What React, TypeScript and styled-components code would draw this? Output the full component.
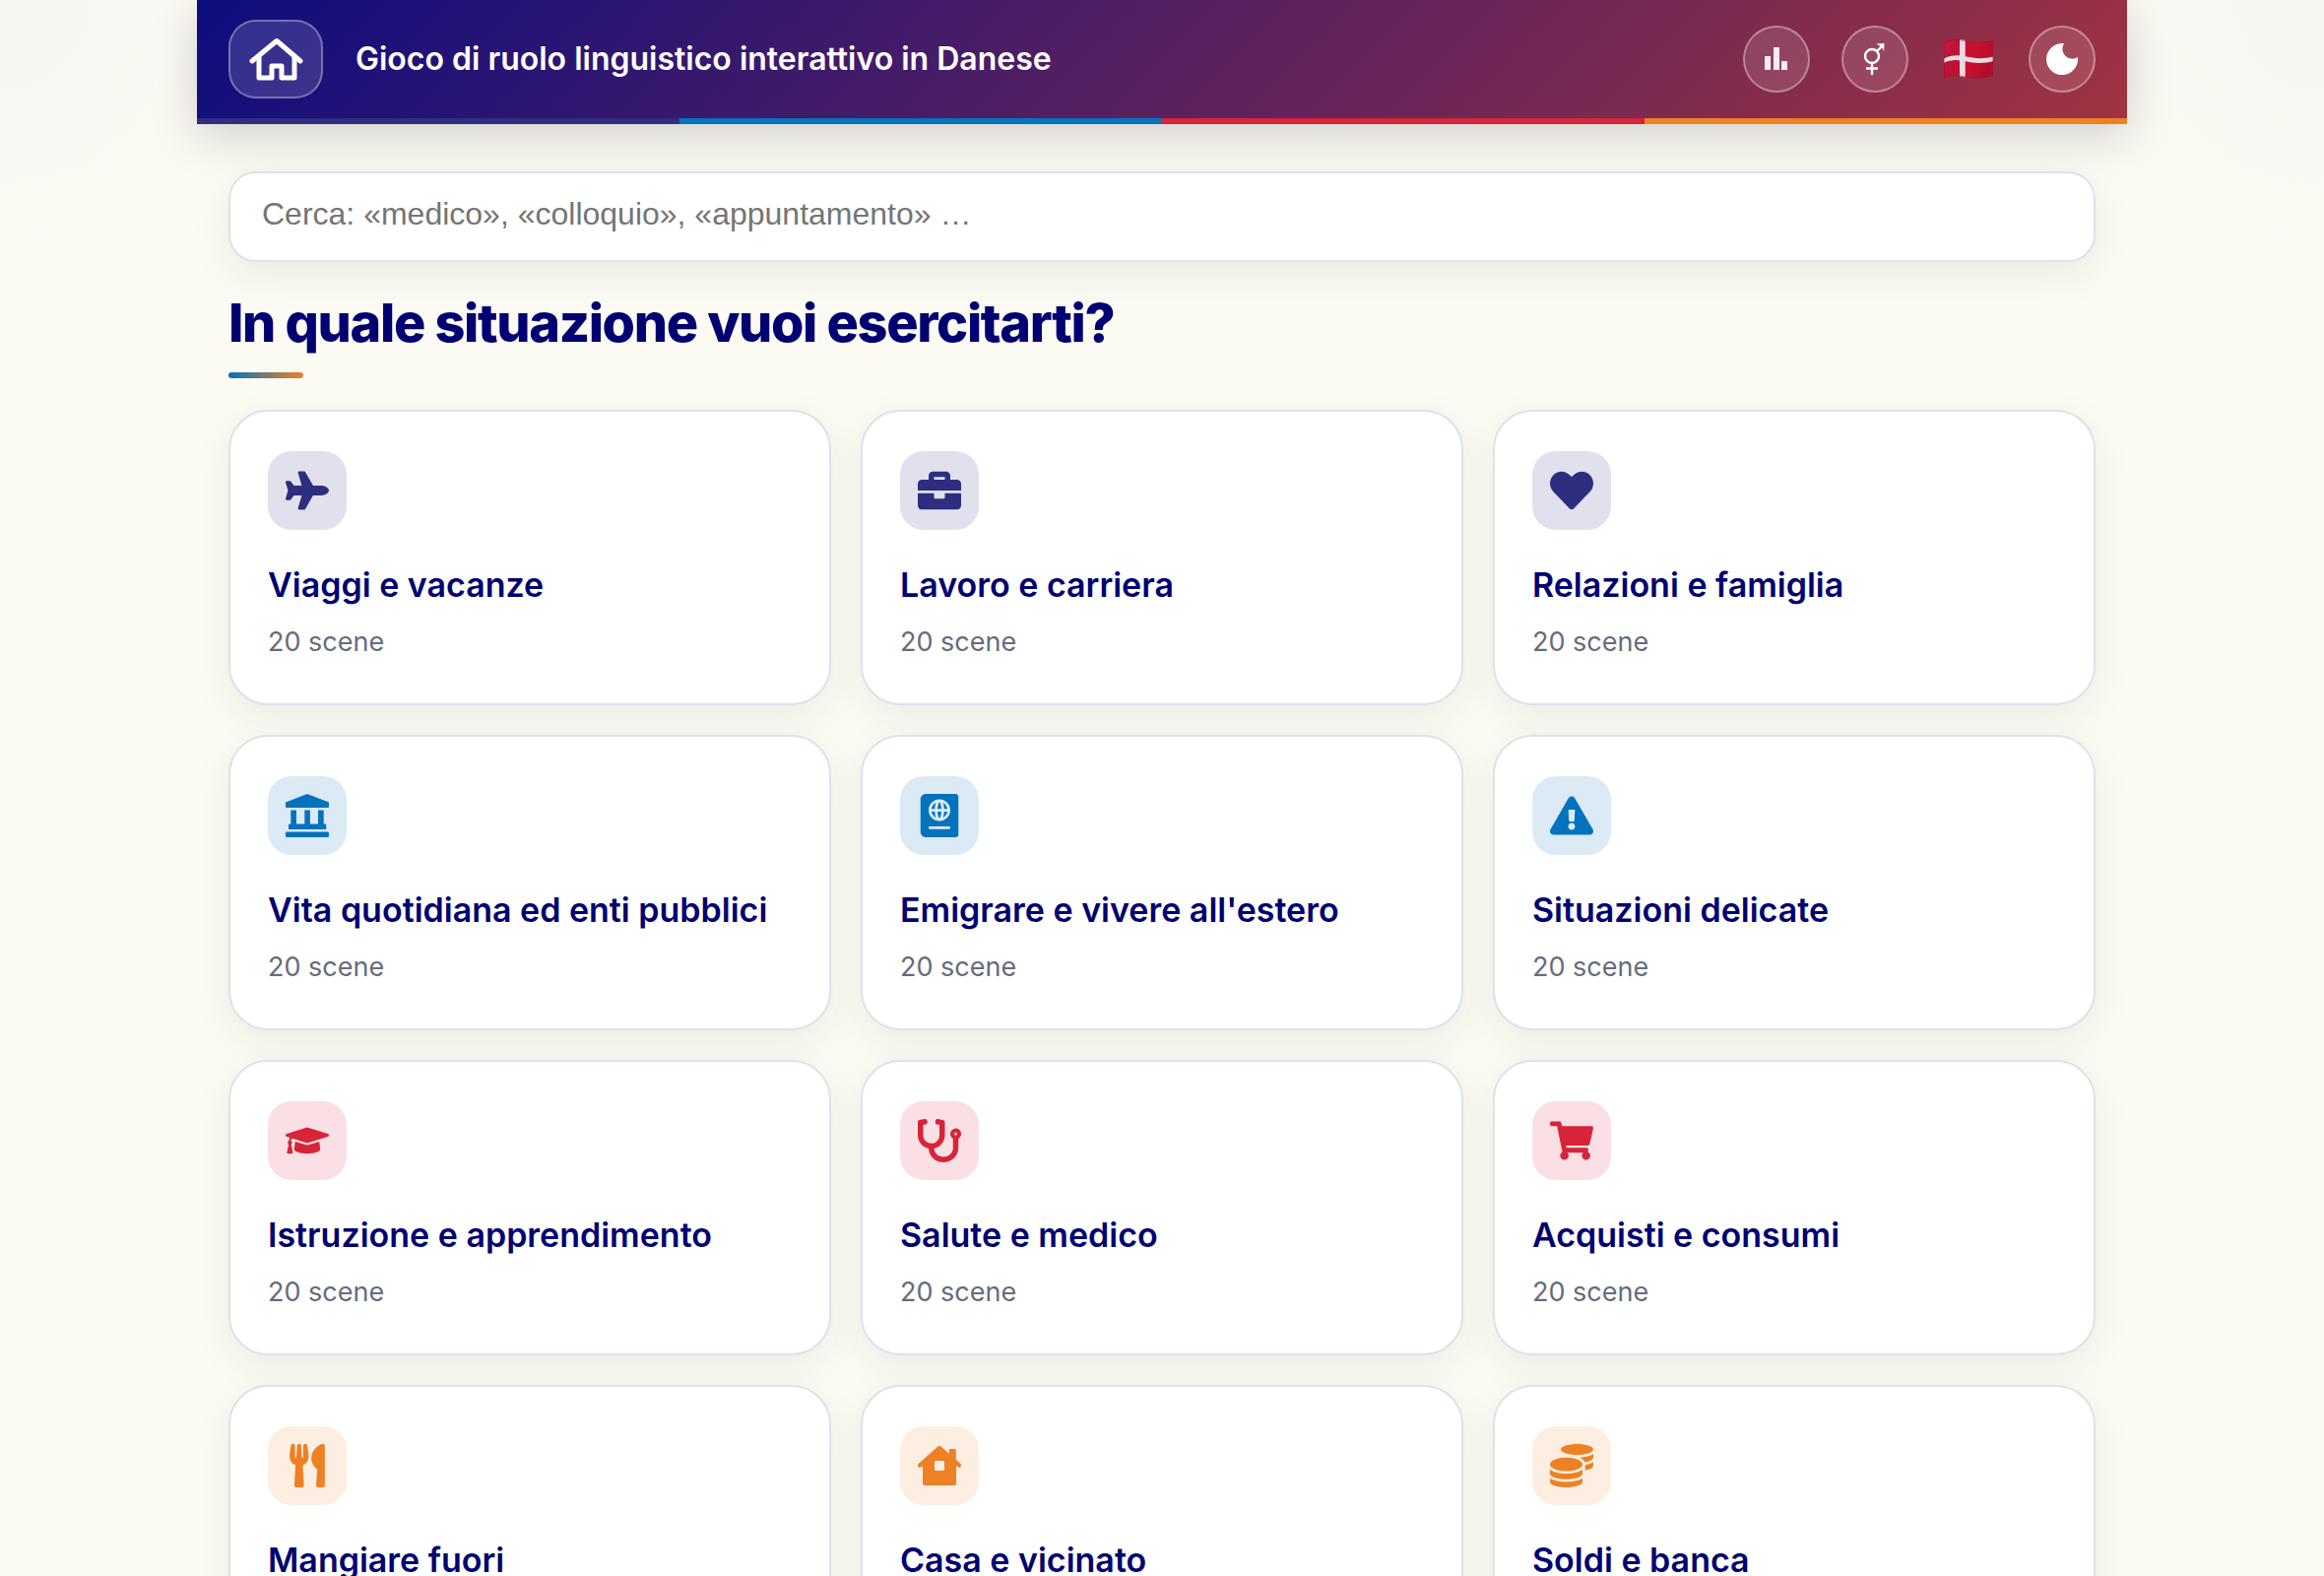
import React from "react";
import type { ComponentType } from "react";
import styled, { createGlobalStyle } from "styled-components";
import {
  FaPlane,
  FaBriefcase,
  FaHeart,
  FaPassport,
  FaExclamationTriangle,
  FaGraduationCap,
  FaStethoscope,
  FaShoppingCart,
  FaUtensils,
  FaCoins,
} from "react-icons/fa";

const GlobalStyle = createGlobalStyle`
  *, *::before, *::after { box-sizing: border-box; }
  body {
    margin: 0;
    font-family: Inter, "Liberation Sans", sans-serif;
    color: #000072;
    background:
      radial-gradient(circle at 0 0, rgba(46, 45, 127, 0.03), transparent 300px),
      radial-gradient(circle at 100% 0, rgba(46, 45, 127, 0.03), transparent 300px),
      #fcfbf3;
  }
`;

const Page = styled.div`
  max-width: 1960px;
  margin: 0 auto;
`;

const Header = styled.header`
  box-shadow: 0 12px 48px rgba(0, 0, 20, 0.18);
`;

const Bar = styled.div`
  display: flex;
  align-items: center;
  justify-content: space-between;
  height: 120px;
  padding: 0 32px;
  background: linear-gradient(135deg, #0d0d7f 0%, #a03341 100%);
`;

const Brand = styled.div`
  display: flex;
  align-items: center;
  gap: 33px;
`;

const HomeButton = styled.button`
  display: grid;
  place-items: center;
  width: 96px;
  height: 80px;
  padding: 0;
  border: 2px solid rgba(255, 255, 255, 0.32);
  border-radius: 28px;
  background: rgba(255, 255, 255, 0.14);
  cursor: pointer;
`;

const SiteTitle = styled.span`
  font-size: 32px;
  line-height: 44px;
  font-weight: 600;
  color: #fff;
`;

const Tools = styled.nav`
  display: flex;
  align-items: center;
  gap: 32px;
`;

const ToolButton = styled.button`
  display: grid;
  place-items: center;
  width: 68px;
  height: 68px;
  padding: 0;
  border: 2px solid rgba(255, 255, 255, 0.36);
  border-radius: 50%;
  background: rgba(255, 255, 255, 0.12);
  cursor: pointer;
`;

const FlagButton = styled.button`
  display: grid;
  place-items: center;
  width: 58px;
  height: 68px;
  padding: 0;
  border: 0;
  background: none;
  cursor: pointer;
`;

const Stripes = styled.div`
  height: 6px;
  background: linear-gradient(
    90deg,
    #2e2d7f 0 25%,
    #0473bd 25% 50%,
    #d82438 50% 75%,
    #ed8123 75%
  );
`;

const Main = styled.main`
  padding: 48px 32px;
`;

const Search = styled.input`
  display: block;
  width: 100%;
  height: 92px;
  padding: 0 32px 6px;
  border: 2px solid #dfe1eb;
  border-radius: 28px;
  background: #fff;
  box-shadow: 0 12px 40px rgba(0, 0, 40, 0.08);
  font: 32px "Liberation Sans", Arial, sans-serif;
  color: #000072;
  &::placeholder {
    color: #757575;
    opacity: 1;
  }
`;

const Heading = styled.h1`
  margin: 28px 0 32px;
  font-size: 54px;
  line-height: 68px;
  font-weight: 800;
  letter-spacing: -0.025em;
  &::after {
    content: "";
    display: block;
    width: 76px;
    height: 6px;
    margin-top: 16px;
    border-radius: 3px;
    background: linear-gradient(90deg, #0473bd, #ed8123);
  }
`;

const Grid = styled.div`
  display: grid;
  grid-template-columns: repeat(3, 1fr);
  gap: 30px;
`;

const Card = styled.button`
  display: flex;
  flex-direction: column;
  align-items: flex-start;
  padding: 40px 38px;
  border: 2px solid #dfe1eb;
  border-radius: 40px;
  background: #fff;
  box-shadow: 0 12px 40px rgba(0, 0, 40, 0.07);
  font-family: inherit;
  color: inherit;
  text-align: left;
  cursor: pointer;
`;

const tones = {
  navy: ["#2e2d7f", "#e1e1ed"],
  blue: ["#0473bd", "#dceaf6"],
  red: ["#d82438", "#fae0e5"],
  orange: ["#ed8123", "#fdeee2"],
};
type Tone = keyof typeof tones;

const Tile = styled.span<{ $tone: Tone }>`
  display: grid;
  place-items: center;
  width: 80px;
  height: 80px;
  border-radius: 24px;
  font-size: 44px;
  color: ${(p) => tones[p.$tone][0]};
  background: ${(p) => tones[p.$tone][1]};
`;

const CardTitle = styled.span`
  margin-top: 34px;
  font-size: 34px;
  line-height: 44px;
  font-weight: 600;
`;

const CardMeta = styled.span`
  margin-top: 14px;
  font-size: 27px;
  line-height: 44px;
  color: #686b7b;
`;

const HomeIcon = () => (
  <svg width="56" height="46" viewBox="0 0 56 46" fill="none" stroke="#fff" strokeWidth="5" strokeLinecap="round" strokeLinejoin="round" aria-hidden="true">
    <path d="M4 25 29 4.500l24 20.500" />
    <path d="M11 21v21h13V30h10v12h13V21" />
  </svg>
);

const ChartIcon = () => (
  <svg width="24" height="24" viewBox="0 0 24 24" fill="#fbeaf3" aria-hidden="true">
    <rect x="0" y="9" width="6" height="14" />
    <rect x="9" y="0" width="6" height="23" />
    <rect x="17" y="14" width="6" height="9" />
  </svg>
);

const GenderIcon = () => (
  <svg width="30" height="36" viewBox="0 0 30 36" fill="none" stroke="#fff" strokeWidth="2.400" aria-hidden="true">
    <circle cx="12" cy="15" r="7" />
    <path d="M12 22v12M6 27.500h12M17 10l5.500-5.500" />
    <path d="m16.500 2.500 8-.5-.5 8-2-4z" fill="#fff" stroke="none" />
  </svg>
);

const MoonIcon = () => (
  <svg width="32" height="32" viewBox="0 0 32 32" fill="#fff" aria-hidden="true">
    <path d="M18 .2A16 16 0 1 0 31.900 14 10 10 0 0 1 18 .2z" />
  </svg>
);

const FlagIcon = () => (
  <svg width="50" height="40" viewBox="0 0 50 40" aria-hidden="true">
    <defs>
      <linearGradient id="cloth" x1="0" y1="0" x2="1" y2="0.400">
        <stop offset="0" stopColor="#cf1743" />
        <stop offset="0.300" stopColor="#bd1236" />
        <stop offset="0.650" stopColor="#c9102f" />
        <stop offset="1" stopColor="#b30f2c" />
      </linearGradient>
    </defs>
    <path d="M0 3C6-.5 13-.5 19 .8 28 2.500 38 4 50 .5V37c-12 4-22 2.500-31 .8C13 36.500 6 36.500 0 40z" fill="url(#cloth)" />
    <path d="M0 19.500c6-3.500 13-3.500 19-2.700 9 1.700 19 4 31 .7v4.500c-12 3.500-22 1.500-31-.2-6-1.300-13-1.300-19 2z" fill="#ecd9e2" />
    <path d="M16 .300q3 0 5.700.8v37.300q-2.700-.6-5.700-.8z" fill="#ecd9e2" />
    <path d="M.5 3.300C6.500 0 13 0 19 1.300 28 3 38 4.500 49.500 1.200v35.500c-11.500 3.500-21.500 2.200-30.500.6-6-1.300-12.500-1.300-18.500 1.900z" fill="none" stroke="#8d1230" strokeOpacity="0.400" />
  </svg>
);

const InstitutionIcon = () => (
  <svg width="1em" height="1em" viewBox="0 0 44 44" fill="currentColor" aria-hidden="true">
    <path d="M22 0 44 8.500V13q0 1-1 1H1q-1 0-1-1V8.500z" />
    <path d="M5.300 16.500H11v14h8.300v-14h5.600v14H33v-14h5.700v14H40q1.300 0 1.300 1.300V36H3v-4.200q0-1.300 1.300-1.300h1z" />
    <rect y="38.500" width="44" height="5.500" rx="1.200" />
  </svg>
);

const CottageIcon = () => (
  <svg width="1em" height="1em" viewBox="0 -2 44 44" fill="currentColor" aria-hidden="true">
    <path
      fillRule="evenodd"
      d="M19.800.9Q22-.8 24.200.9L31.800 7.700V4q0-1 1-1h5q1 0 1 1v10l4.700 4.300Q44.700 19.700 43.500 21.200 42.200 22.600 40.900 21.600L39 20v18q0 2-2 2H7q-2 0-2-2V20l-1.900 1.600Q1.800 22.600.5 21.200-.7 19.700.5 18.300zM17 16v8q0 1 1 1h8q1 0 1-1v-8q0-1-1-1h-8q-1 0-1 1z"
    />
  </svg>
);

const categories: { title: string; icon: ComponentType; tone: Tone }[] = [
  { title: "Viaggi e vacanze", icon: FaPlane, tone: "navy" },
  { title: "Lavoro e carriera", icon: FaBriefcase, tone: "navy" },
  { title: "Relazioni e famiglia", icon: FaHeart, tone: "navy" },
  { title: "Vita quotidiana ed enti pubblici", icon: InstitutionIcon, tone: "blue" },
  { title: "Emigrare e vivere all'estero", icon: FaPassport, tone: "blue" },
  { title: "Situazioni delicate", icon: FaExclamationTriangle, tone: "blue" },
  { title: "Istruzione e apprendimento", icon: FaGraduationCap, tone: "red" },
  { title: "Salute e medico", icon: FaStethoscope, tone: "red" },
  { title: "Acquisti e consumi", icon: FaShoppingCart, tone: "red" },
  { title: "Mangiare fuori", icon: FaUtensils, tone: "orange" },
  { title: "Casa e vicinato", icon: CottageIcon, tone: "orange" },
  { title: "Soldi e banca", icon: FaCoins, tone: "orange" },
];

export default function App() {
  return (
    <>
      <GlobalStyle />
      <Page>
        <Header>
          <Bar>
            <Brand>
              <HomeButton type="button" aria-label="Home">
                <HomeIcon />
              </HomeButton>
              <SiteTitle>Gioco di ruolo linguistico interattivo in Danese</SiteTitle>
            </Brand>
            <Tools>
              <ToolButton type="button" aria-label="Statistiche">
                <ChartIcon />
              </ToolButton>
              <ToolButton type="button" aria-label="Genere">
                <GenderIcon />
              </ToolButton>
              <FlagButton type="button" aria-label="Danese">
                <FlagIcon />
              </FlagButton>
              <ToolButton type="button" aria-label="Tema scuro">
                <MoonIcon />
              </ToolButton>
            </Tools>
          </Bar>
          <Stripes />
        </Header>
        <Main>
          <Search type="search" aria-label="Cerca" placeholder="Cerca: «medico», «colloquio», «appuntamento» …" />
          <Heading>In quale situazione vuoi esercitarti?</Heading>
          <Grid>
            {categories.map(({ title, icon: Icon, tone }) => (
              <Card type="button" key={title}>
                <Tile $tone={tone}>
                  <Icon />
                </Tile>
                <CardTitle>{title}</CardTitle>
                <CardMeta>20 scene</CardMeta>
              </Card>
            ))}
          </Grid>
        </Main>
      </Page>
    </>
  );
}
